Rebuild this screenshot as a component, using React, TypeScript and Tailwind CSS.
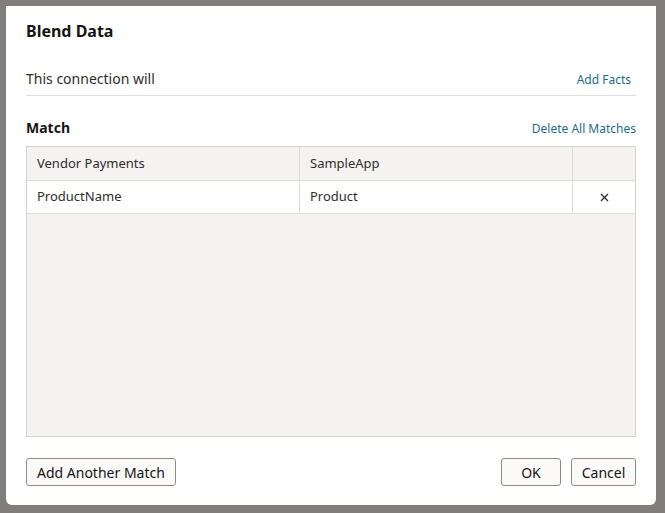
export default function App() {
  return (
    <div
      className="h-[513px] w-[665px] bg-[#7f7e7c] pl-[6px] pt-[6px]"
      style={{ fontFamily: '"Noto Sans", sans-serif' }}
    >
      <div className="flex h-[499px] w-[650px] flex-col rounded-b-[6px] bg-white px-[20px] pt-[14px] pb-[19px] text-[#161513]">
        <h1 className="text-[16px] font-bold leading-[22px]">Blend Data</h1>

        <div className="mt-[27px] flex items-end justify-between border-b border-[#dfdedc] pb-[6px]">
          <span className="text-[14px] leading-[20px] text-[#2f2d2b]">This connection will</span>
          <a className="mr-[5px] text-[12px] leading-[18px] text-[#1d6b8c]">Add Facts</a>
        </div>

        <div className="mt-[22px] flex items-end justify-between">
          <span className="text-[14px] font-bold leading-[20px]">Match</span>
          <a className="text-[12px] leading-[18px] text-[#1d6b8c]">Delete All Matches</a>
        </div>

        <div className="mt-[8px] flex h-[291px] flex-col border border-[#d4d3d0] bg-[#f4f3f1]">
          <div className="grid h-[34px] grid-cols-[273px_273px_1fr] border-b border-[#dedcd9] text-[13px] text-[#2f2d2b]">
            <div className="flex items-center border-r border-[#dedcd9] px-[10px]">Vendor Payments</div>
            <div className="flex items-center border-r border-[#dedcd9] px-[10px]">SampleApp</div>
            <div />
          </div>
          <div className="grid h-[33px] grid-cols-[273px_273px_1fr] border-b border-[#dedcd9] bg-white text-[13px] text-[#2f2d2b]">
            <div className="flex items-center border-r border-[#dedcd9] px-[10px]">ProductName</div>
            <div className="flex items-center border-r border-[#dedcd9] px-[10px]">Product</div>
            <div className="flex items-center justify-center">
              <svg width="9" height="9" viewBox="0 0 9 9" stroke="#2f2d2b" strokeWidth="1.3">
                <path d="M1 1L8 8M8 1L1 8" />
              </svg>
            </div>
          </div>
        </div>

        <div className="mt-auto flex items-center">
          <button className="h-[28px] rounded-[3px] border border-[#8d8b88] bg-[#fbfaf8] px-[10px] text-[14px] text-[#161513]">
            Add Another Match
          </button>
          <button className="ml-auto h-[28px] w-[60px] rounded-[3px] border border-[#8d8b88] bg-[#fbfaf8] text-[14px] text-[#161513]">
            OK
          </button>
          <button className="ml-[10px] h-[28px] w-[65px] rounded-[3px] border border-[#8d8b88] bg-[#fbfaf8] text-[14px] text-[#161513]">
            Cancel
          </button>
        </div>
      </div>
    </div>
  );
}
